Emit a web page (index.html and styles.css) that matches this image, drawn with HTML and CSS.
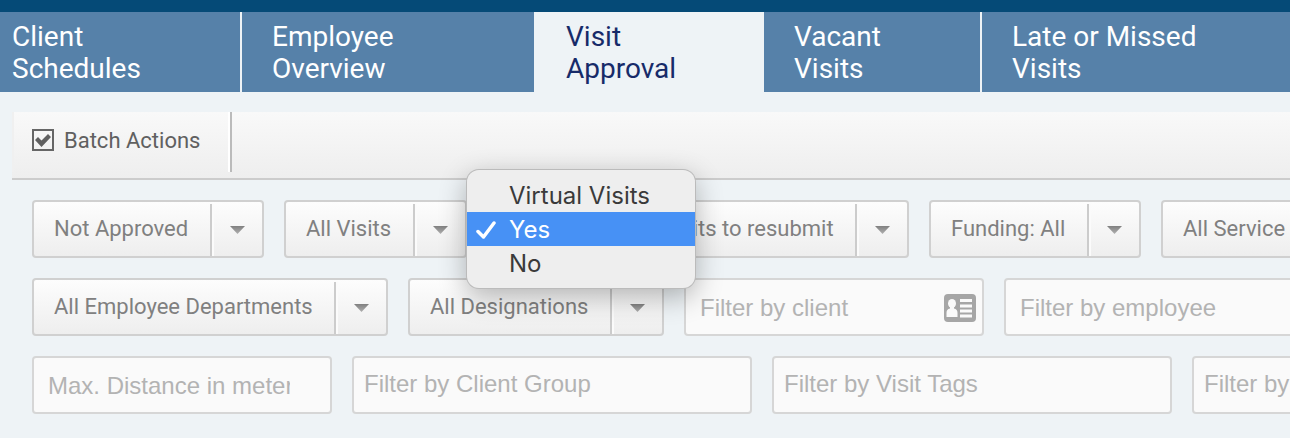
FILE: index.html
```html
<!DOCTYPE html>
<html lang="en">
<head>
  <meta charset="UTF-8" />
  <meta name="viewport" content="width=device-width, initial-scale=1.0"/>
  <title>Visit Approval</title>
  <link rel="stylesheet" href="styles.css">
</head>
<body>
  <nav class="tabs">
    <a class="tab" href="#">Client<br>Schedules</a>
    <a class="tab" href="#">Employee<br>Overview</a>
    <a class="tab active" href="#">Visit<br>Approval</a>
    <a class="tab" href="#">Vacant<br>Visits</a>
    <a class="tab" href="#">Late or Missed<br>Visits</a>
  </nav>

  <main>
    <div class="toolbar">
      <label class="batch">
        <span class="tick">
          <input type="checkbox" checked>
          <svg viewBox="0 0 22 22"><path d="M3 11 6 8l3.500 3.500L16 5l3 3-9.500 10z"/></svg>
        </span>
        Batch Actions
      </label>
    </div>

    <form class="filters">
      <div class="row">
        <div class="dropdown"><select aria-label="Approval"><option>Not Approved</option></select></div>
        <div class="dropdown"><select aria-label="Visits"><option>All Visits</option></select></div>
        <div class="dropdown">
          <select aria-label="Virtual Visits"><option>Yes</option></select>
          <ul class="menu" role="listbox" aria-label="Virtual Visits">
            <li role="option">Virtual Visits</li>
            <li role="option" class="selected" aria-selected="true">
              <svg viewBox="0 0 20 20"><path d="M2 11.500 7.500 17 18 3"/></svg>
              Yes
            </li>
            <li role="option">No</li>
          </ul>
        </div>
        <div class="dropdown"><select aria-label="Resubmission"><option>Visits to resubmit</option></select></div>
        <div class="dropdown"><select aria-label="Funding"><option>Funding: All</option></select></div>
        <div class="dropdown"><select aria-label="Service"><option>All Service</option></select></div>
      </div>

      <div class="row">
        <div class="dropdown"><select aria-label="Employee department"><option>All Employee Departments</option></select></div>
        <div class="dropdown"><select aria-label="Designation"><option>All Designations</option></select></div>
        <div class="field">
          <input type="text" aria-label="Client" placeholder="Filter by client">
          <svg class="card-icon" viewBox="0 0 32 28">
            <rect width="32" height="28" rx="4" fill="#a6a6a6"/>
            <ellipse cx="8" cy="9.500" rx="4" ry="4.500" fill="#fafafa"/>
            <path d="M6 12h4v2.500c2.500.5 3.500 2 3.500 4.500v4h-11v-4c0-2.500 1-4 3.500-4.500z" fill="#fafafa"/>
            <path d="M16 6.500h12M16 12h12M16 17h12M16 22h12" stroke="#fafafa" stroke-width="3"/>
          </svg>
        </div>
        <div class="field"><input type="text" aria-label="Employee" placeholder="Filter by employee"></div>
      </div>

      <div class="row">
        <div class="field"><input type="text" class="distance" aria-label="Max. distance" placeholder="Max. Distance in meters"></div>
        <div class="field wide"><input type="text" aria-label="Client group" placeholder="Filter by Client Group"></div>
        <div class="field wide"><input type="text" aria-label="Visit tags" placeholder="Filter by Visit Tags"></div>
        <div class="field wide"><input type="text" aria-label="Employee tags" placeholder="Filter by Employee Tags"></div>
      </div>
    </form>
  </main>
</body>
</html>
```
FILE: styles.css
```css
* { box-sizing: border-box; }
body {
  margin: 0;
  background-color: #eef3f6;
  font-family: Roboto, Arial, sans-serif;
  overflow: hidden;
}
.tabs {
  display: grid;
  grid-template-columns: 242fr 292fr 230fr 218fr 308fr;
  border-top: 12px solid #054a77;
}
.tab {
  padding: 9px 30px 7px;
  background-color: #5681a9;
  border-right: 2px solid #eef3f6;
  color: #fff;
  font-size: 28px;
  line-height: 32px;
  text-decoration: none;
  white-space: nowrap;
}
.tab:first-child {
  padding-left: 12px;
}
.tab:nth-child(2),
.tab:last-child {
  border-right: none;
}
.tab.active {
  padding-left: 32px;
  background-color: #eef3f6;
  color: #172b69;
}
main {
  padding: 20px 0 24px 12px;
}
.toolbar {
  display: flex;
  align-items: flex-start;
  height: 68px;
  background: linear-gradient(#f9f9f9, #eee);
  border-bottom: 2px solid #ccc;
}
.batch {
  display: flex;
  align-items: center;
  gap: 10px;
  height: 60px;
  padding: 0 30px 4px 18px;
  border-left: 2px solid #f0f0f0;
  border-right: 2px solid #bbb;
  box-shadow: inset -2px 0 #fff;
  color: #606060;
  font-size: 22px;
}
.tick {
  position: relative;
  display: flex;
}
.tick input {
  appearance: none;
  width: 22px;
  height: 22px;
  margin: 0;
  border: 2px solid #666;
}
.tick svg {
  position: absolute;
  inset: 0;
  fill: #606060;
}
.filters {
  display: flex;
  flex-direction: column;
  gap: 20px;
  padding: 20px 0 0 20px;
}
.row {
  display: flex;
  gap: 20px;
}
.dropdown {
  position: relative;
  flex: none;
}
.dropdown select {
  appearance: none;
  height: 58px;
  padding: 0 73px 2px 20px;
  border: 2px solid #d0d0d0;
  border-radius: 4px;
  background: linear-gradient(#fdfdfd, #eee);
  color: #808080;
  font-family: inherit;
  font-size: 22px;
}
/* divider and arrow */
.dropdown::before {
  content: "";
  position: absolute;
  top: 4px;
  bottom: 2px;
  right: 52px;
  width: 2px;
  background-color: #ccc;
  box-shadow: 2px 0 #fbfbfb;
}
.dropdown::after {
  content: "";
  position: absolute;
  top: 26px;
  right: 19px;
  width: 15px;
  height: 8px;
  background: linear-gradient(#808080, #b0b0b0);
  clip-path: polygon(0 0, 100% 0, 50% 100%);
}
.menu {
  position: absolute;
  z-index: 1;
  top: -30px;
  left: -20px;
  width: 228px;
  margin: 0;
  padding: 8px 0;
  list-style: none;
  background-color: #eee;
  border-radius: 12px;
  box-shadow: 0 0 0 1px #bbb, 0 8px 28px rgba(0, 0, 0, 0.3);
  color: #3a3a3a;
  font-family: Inter, sans-serif;
  font-size: 24px;
  line-height: 32px;
}
.menu li {
  position: relative;
  padding: 2px 0 0 42px;
}
.menu .selected {
  background-color: #4791f5;
  color: #fff;
}
.menu svg {
  position: absolute;
  top: 8px;
  left: 9px;
  width: 20px;
  height: 20px;
  fill: none;
  stroke: #fff;
  stroke-width: 3.5;
  stroke-linecap: round;
  stroke-linejoin: round;
}
.field {
  position: relative;
  flex: none;
  width: 300px;
}
.field.wide {
  width: 400px;
}
.field input {
  width: 100%;
  height: 58px;
  padding: 2px 14px 0;
  border: 2px solid #d6d6d6;
  border-radius: 4px;
  background-color: #fafafa;
  font-family: "Liberation Sans", Arial, sans-serif;
  font-size: 24px;
}
.field.wide input {
  padding: 0 10px 2px;
}
.field .distance {
  padding-right: 40px;
}
.field input::placeholder {
  color: #b3b3b3;
}
.card-icon {
  position: absolute;
  top: 16px;
  right: 8px;
  width: 32px;
  height: 28px;
}
```
